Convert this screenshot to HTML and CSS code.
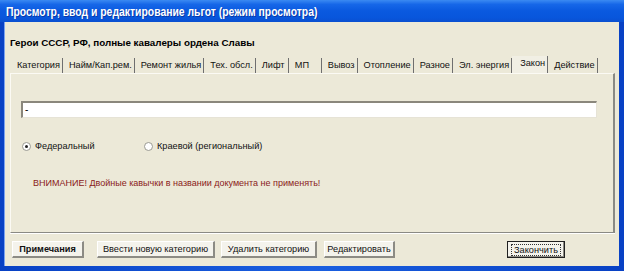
FILE: index.html
```html
<!DOCTYPE html>
<html lang="ru">
<head>
<meta charset="utf-8">
<title>Просмотр льгот</title>
<link rel="stylesheet" href="styles.css">
</head>
<body>
<div class="window">
  <div class="titlebar"><span class="title">Просмотр, ввод и редактирование льгот (режим просмотра)</span></div>
  <div class="client">
    <div class="heading">Герои СССР, РФ, полные кавалеры ордена Славы</div>
    <div class="tabs">
      <div class="tab">Категория</div>
      <div class="tab">Найм/Кап.рем.</div>
      <div class="tab">Ремонт жилья</div>
      <div class="tab">Тех. обсл.</div>
      <div class="tab">Лифт</div>
      <div class="tab">МП</div>
      <div class="tab">Вывоз</div>
      <div class="tab">Отопление</div>
      <div class="tab">Разное</div>
      <div class="tab">Эл. энергия</div>
      <div class="tab tab-active">Закон</div>
      <div class="tab">Действие</div>
    </div>
    <div class="panel">
      <div class="field">-</div>
      <div class="radios">
        <label class="radio radio-fed"><span class="dot checked"></span>Федеральный</label>
        <label class="radio"><span class="dot"></span>Краевой (региональный)</label>
      </div>
      <div class="warning">ВНИМАНИЕ! Двойные кавычки в названии документа не применять!</div>
    </div>
    <div class="buttons">
      <div class="btn btn-notes">Примечания</div>
      <div class="btn btn-new">Ввести новую категорию</div>
      <div class="btn btn-del">Удалить категорию</div>
      <div class="btn btn-edit">Редактировать</div>
      <div class="btn btn-finish"><span class="focus">Закончить</span></div>
    </div>
  </div>
</div>
</body>
</html>
```
FILE: styles.css
```css
html, body {
  margin: 0;
  padding: 0;
  background: #ffffff;
}
.window {
  width: 624px;
  height: 271px;
  box-sizing: border-box;
  background: linear-gradient(90deg, #0841c4 0%, #1a5fe0 50%, #0841c4 100%);
  padding: 0 5px 5px 4px;
  display: flex;
  flex-direction: column;
  font-family: "Liberation Sans", Arial, sans-serif;
  color: #000;
}
.titlebar {
  height: 22px;
  margin: 0 -5px 0 -4px;
  padding-left: 6px;
  background: linear-gradient(180deg, #3b8af2 0%, #1667e8 20%, #0a59df 50%, #0856dc 80%, #0a4fd0 100%);
  display: flex;
  align-items: center;
}
.title {
  color: #ffffff;
  font-weight: bold;
  font-size: 10.4px;
  transform: scaleY(1.15);
  text-shadow: 1px 1px 0 #0a3aa8;
}
.client {
  flex: 1;
  background: #ece9d8;
  display: flex;
  flex-direction: column;
  padding: 0 4px 0 5px;
  border-left: 1px solid #7aa2f0;
}
.heading {
  font-weight: bold;
  font-size: 9.8px;
  line-height: 13px;
  margin-top: 14px;
}
.tabs {
  display: flex;
  margin-top: 7px;
  height: 17px;
  padding-left: 1px;
}
.tab {
  flex-shrink: 0;
  white-space: nowrap;
  font-size: 9.2px;
  min-width: 24px;
  padding: 0 2px 0 6px;
  border-right: 1px solid #6f6f6f;
  height: 15px;
  margin-top: 2px;
  line-height: 15px;
  color: #111;
}
.tab-active {
  background: #f1efe4;
  margin-top: 0;
  height: 17px;
  line-height: 15px;
  padding-left: 8px;
}
.panel {
  height: 160px;
  box-sizing: border-box;
  border-top: 1px solid #fbfaf4;
  border-left: 1px solid #fbfaf4;
  border-right: 2px solid #8a8a84;
  border-bottom: 1px solid #8a8a84;
  box-shadow: 0 1px 0 #ffffff;
  padding: 27px 16px 0 10px;
  display: flex;
  flex-direction: column;
}
.field {
  height: 17px;
  box-sizing: border-box;
  background: #ffffff;
  border-top: 2px solid #8a877c;
  border-left: 2px solid #8a877c;
  border-right: 1px solid #e6e3d6;
  border-bottom: 1px solid #e6e3d6;
  font-size: 10px;
  line-height: 13px;
  padding-left: 2px;
}
.radios {
  display: flex;
  margin-top: 21px;
  padding-left: 1px;
  height: 14px;
  align-items: center;
}
.radio {
  display: flex;
  align-items: center;
  font-size: 9.2px;
  color: #111;
}
.radio-fed {
  width: 122px;
}
.dot {
  width: 9px;
  height: 9px;
  border-radius: 50%;
  background: #ffffff;
  border: 1px solid #9a9a92;
  margin-right: 4px;
  box-sizing: border-box;
  display: flex;
  align-items: center;
  justify-content: center;
}
.dot.checked::after {
  content: "";
  width: 3px;
  height: 3px;
  border-radius: 50%;
  background: #222;
}
.warning {
  margin-top: 25px;
  padding-left: 12px;
  font-size: 9px;
  color: #8a1a1a;
}
.buttons {
  display: flex;
  margin-top: 8px;
  padding-left: 2px;
  height: 17px;
}
.btn {
  flex-shrink: 0;
  white-space: nowrap;
  height: 17px;
  box-sizing: border-box;
  background: #f4f3ec;
  border-top: 1px solid #ffffff;
  border-left: 1px solid #ffffff;
  border-right: 2px solid #8c8b84;
  border-bottom: 2px solid #8c8b84;
  font-size: 9.2px;
  line-height: 14px;
  text-align: center;
  color: #111;
  margin-right: 6px;
}
.btn-notes {
  width: 72px;
  font-weight: bold;
  margin-right: 13px;
}
.btn-new { width: 118px; }
.btn-del { width: 96px; margin-right: 7px; }
.btn-edit { width: 71px; }
.btn-finish {
  width: 58px;
  margin-left: 106px;
  border: 1px solid #202020;
  box-shadow: inset -1px -1px 0 #8c8b84;
  display: flex;
  align-items: center;
  justify-content: center;
}
.focus {
  border: 1px dotted #333;
  padding: 0 2px;
  line-height: 10px;
}
```
